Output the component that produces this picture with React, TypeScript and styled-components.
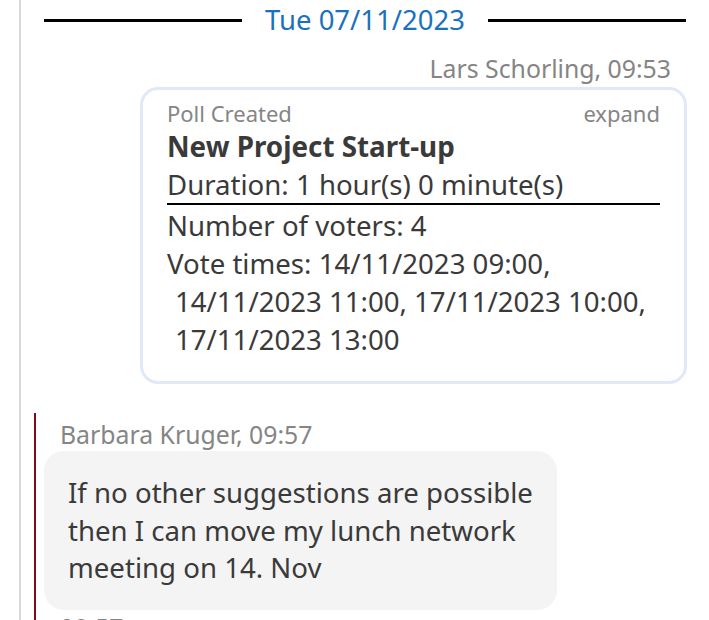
import styled, { createGlobalStyle } from 'styled-components';

const GlobalStyle = createGlobalStyle`
  html, body {
    margin: 0;
    padding: 0;
    background: #ffffff;
  }
  body {
    font-family: "Noto Sans", "Open Sans", sans-serif;
    color: #3a3a3a;
  }
`;

const voteTimes = [
  '14/11/2023 09:00',
  '14/11/2023 11:00',
  '17/11/2023 10:00',
  '17/11/2023 13:00',
];

function App() {
  return (
    <>
      <GlobalStyle />
      <StPage>
        <StThread>
          <StDateRow>
            <StDateLine />
            <StDateText>Tue 07/11/2023</StDateText>
            <StDateLine />
          </StDateRow>

          <StMeta $align="right">Lars Schorling, 09:53</StMeta>
          <StPollCard>
            <StPollHeader>
              <span>Poll Created</span>
              <span>expand</span>
            </StPollHeader>
            <StPollTitle>New Project Start-up</StPollTitle>
            <StPollDuration>Duration: 1 hour(s) 0 minute(s)</StPollDuration>
            <StPollLine>Number of voters: 4</StPollLine>
            <StPollTimes>Vote times: {voteTimes.join(', ')}</StPollTimes>
          </StPollCard>

          <StMessageGroup>
            <StMeta $align="left">Barbara Kruger, 09:57</StMeta>
            <StBubble>
              If no other suggestions are possible then I can move my lunch network meeting on 14. Nov
            </StBubble>
            <StMeta $align="left">09:57</StMeta>
          </StMessageGroup>
        </StThread>
      </StPage>
    </>
  );
}

export default App;

const StPage = styled.div`
  width: 709px;
  height: 620px;
  overflow: hidden;
  padding-left: 19px;
  box-sizing: border-box;
`;

const StThread = styled.div`
  border-left: 2px solid #d9d9d9;
  min-height: 620px;
  padding-top: 1px;
  box-sizing: border-box;
`;

const StDateRow = styled.div`
  display: flex;
  align-items: center;
  gap: 23px;
  margin: 0 23px 0 23px;
`;

const StDateLine = styled.div`
  flex: 1;
  height: 3px;
  background: #000000;
`;

const StDateText = styled.span`
  font-size: 27.5px;
  line-height: 38px;
  color: #1a72bf;
`;

const StMeta = styled.div<{ $align: 'left' | 'right' }>`
  font-size: 24.8px;
  line-height: 28px;
  color: #858585;
  text-align: ${(p) => p.$align};
  ${(p) => (p.$align === 'right' ? 'margin: 15px 38px 5px 0;' : 'padding-left: 24px;')}
`;

const StPollCard = styled.div`
  margin: 0 22px 0 119px;
  border: 3px solid #e1e9f8;
  border-radius: 18px;
  padding: 9px 24px 23px 24px;
`;

const StPollHeader = styled.div`
  display: flex;
  justify-content: space-between;
  font-size: 22px;
  line-height: 28px;
  color: #858585;
`;

const StPollTitle = styled.div`
  font-size: 27.8px;
  font-weight: 700;
  line-height: 38px;
  color: #3a3a3a;
`;

const StPollDuration = styled.div`
  font-size: 27.6px;
  line-height: 38px;
  border-bottom: 2px solid #000000;
  margin-bottom: 1px;
`;

const StPollLine = styled.div`
  font-size: 27.6px;
  line-height: 38px;
`;

const StPollTimes = styled(StPollLine)`
  padding-left: 8px;
  text-indent: -8px;
`;

const StMessageGroup = styled.div`
  margin: 29px 0 0 13px;
  padding-top: 7px;
  border-left: 2px solid #7d0d1c;
  display: flex;
  flex-direction: column;
  align-items: flex-start;
  gap: 3px;
`;

const StBubble = styled.div`
  margin-left: 8px;
  max-width: 513px;
  box-sizing: border-box;
  background: #f4f4f4;
  border-radius: 20px;
  padding: 23px 24px 23px 24px;
  font-size: 27.6px;
  line-height: 37.5px;
  color: #3a3a3a;
`;
